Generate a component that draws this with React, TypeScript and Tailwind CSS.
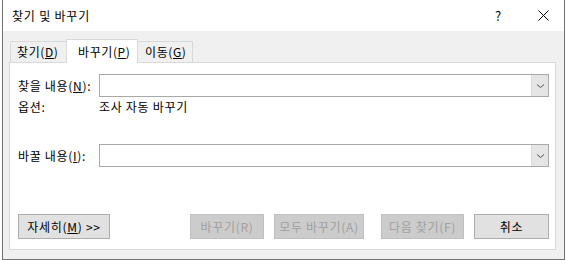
const font = { fontFamily: '"Noto Sans CJK KR", "Noto Sans", sans-serif' };

function Chevron() {
  return (
    <svg width="9" height="6" viewBox="0 0 9 6" fill="none">
      <path d="M1 1.5 L4.5 4.5 L8 1.5" stroke="#505050" strokeWidth="1" />
    </svg>
  );
}

function Combo() {
  return (
    <div className="flex h-[23px] flex-1 border border-[#a9a9a9] bg-white">
      <div className="flex-1" />
      <div className="flex w-[17px] items-center justify-center border-l border-[#dcdcdc] bg-[#e5e5e5]">
        <Chevron />
      </div>
    </div>
  );
}

function Btn({ label, disabled, w, className = "" }: { label: React.ReactNode; disabled?: boolean; w: string; className?: string }) {
  return (
    <div
      className={`flex h-[25px] items-center justify-center border text-[12px] tracking-[0.7px] ${w} ${className} ${
        disabled ? "border-[#bfbfbf] bg-[#cccccc] text-[#a0a0a0]" : "border-[#adadad] bg-[#e1e1e1] text-black"
      }`}
    >
      {label}
    </div>
  );
}

export default function App() {
  return (
    <div className="h-[260px] w-[567px] bg-white pl-[2px] pr-[2px]" style={font}>
      <div className="flex h-[260px] flex-col border-x border-b border-[#707070] bg-[#f0f0f0]">
        {/* title bar */}
        <div className="flex h-[31px] items-center bg-white text-[12px] tracking-[0.8px] text-black">
          <span className="ml-[9px]">찾기 및 바꾸기</span>
          <span className="ml-auto mr-[36px] text-[13px]">?</span>
          <svg className="mr-[15px]" width="11" height="11" viewBox="0 0 11 11">
            <path d="M0.5 0.5 L10.5 10.5 M10.5 0.5 L0.5 10.5" stroke="#000" strokeWidth="1" />
          </svg>
        </div>

        {/* tabs */}
        <div className="ml-[6px] mr-[8px] mt-[8px] flex items-end text-[12px] tracking-[0.6px] text-black">
          <div className="ml-[1px] flex h-[21px] w-[58px] items-center border-x border-t border-[#d9d9d9] pl-[6px]">
            찾기(<span className="underline">D</span>)
          </div>
          <div className="relative z-10 -mx-[2px] -mb-px flex h-[24px] w-[72px] items-center border-x border-t border-[#d9d9d9] bg-white pl-[11px]">
            바꾸기(<span className="underline">P</span>)
          </div>
          <div className="flex h-[21px] w-[57px] items-center border-r border-t border-[#d9d9d9] pl-[9px]">
            이동(<span className="underline">G</span>)
          </div>
        </div>

        <div className="ml-[6px] mr-[8px] flex flex-col border border-[#d9d9d9] bg-white pb-[10px] pl-[8px] pr-[6px] pt-[11px] text-[12px] tracking-[0.7px] text-black">
          <div className="flex h-[23px] items-center">
            <span className="w-[81px]">
              찾을 내용(<span className="underline">N</span>):
            </span>
            <Combo />
          </div>
          <div className="mt-[1px] flex h-[17px] items-center">
            <span className="w-[81px]">옵션:</span>
            <span>조사 자동 바꾸기</span>
          </div>
          <div className="mt-[29px] flex h-[23px] items-center">
            <span className="w-[81px]">
              바꿀 내용(<span className="underline">I</span>):
            </span>
            <Combo />
          </div>
          <div className="mt-[47px] flex items-center">
            <Btn
              w="w-[92px]"
              label={
                <span>
                  자세히(<span className="underline">M</span>) &gt;&gt;
                </span>
              }
            />
            <Btn w="w-[74px]" className="ml-auto" disabled label="바꾸기(R)" />
            <Btn w="w-[90px]" className="ml-[10px]" disabled label="모두 바꾸기(A)" />
            <Btn w="w-[83px]" className="ml-[17px]" disabled label="다음 찾기(F)" />
            <Btn w="w-[75px]" className="ml-[10px]" label="취소" />
          </div>
        </div>
      </div>
    </div>
  );
}
